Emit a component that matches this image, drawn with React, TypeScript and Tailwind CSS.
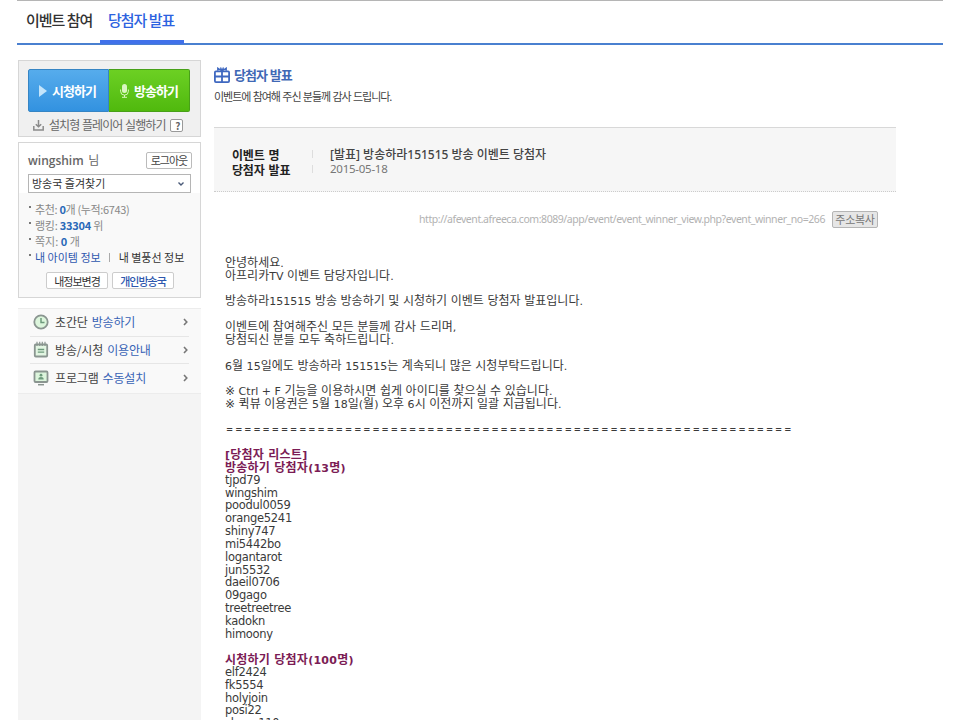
import { ReactNode } from "react";

const notice = [
  "안녕하세요.",
  "아프리카TV 이벤트 담당자입니다.",
  "",
  "방송하라151515 방송 방송하기 및 시청하기 이벤트 당첨자 발표입니다.",
  "",
  "이벤트에 참여해주신 모든 분들께 감사 드리며,",
  "당첨되신 분들 모두 축하드립니다.",
  "",
  "6월 15일에도 방송하라 151515는 계속되니 많은 시청부탁드립니다.",
  "",
  "※ Ctrl + F 기능을 이용하시면 쉽게 아이디를 찾으실 수 있습니다.",
  "※ 퀵뷰 이용권은 5월 18일(월) 오후 6시 이전까지 일괄 지급됩니다.",
];

const broadcastWinners = [
  "tjpd79",
  "wingshim",
  "poodul0059",
  "orange5241",
  "shiny747",
  "mi5442bo",
  "logantarot",
  "jun5532",
  "daeil0706",
  "09gago",
  "treetreetree",
  "kadokn",
  "himoony",
];

const viewWinners = ["elf2424", "fk5554", "holyjoin", "posi22", "shean110"];

// Hangul is set one pixel larger than the latin text around it
function Mixed({ text }: { text: string }) {
  return (
    <>
      {text.split(/([가-힣※]+)/).map((part, i) =>
        i % 2 ? (
          <span key={i} className="text-[12px]">
            {part}
          </span>
        ) : (
          part
        )
      )}
    </>
  );
}

function Line({ children, heading }: { children?: ReactNode; heading?: boolean }) {
  return (
    <div
      className={
        heading
          ? "h-[12.82px] font-bold tracking-[0.25px] text-[#7b1c55]"
          : "h-[12.82px] tracking-[0.02px]"
      }
    >
      {children}
    </div>
  );
}

function Winner({ id }: { id: string }) {
  return (
    <div className="h-[12.82px] text-[11.5px] leading-[11px] tracking-[-0.28px]">{id}</div>
  );
}

function ClockIcon() {
  return (
    <svg width="16" height="16" viewBox="0 0 16 16" fill="none">
      <circle cx="8" cy="8" r="6.7" fill="#dcf5dc" stroke="#8a9590" strokeWidth="1.8" />
      <path d="M8 4v4.5h3.5" stroke="#6d9a7c" strokeWidth="1.5" />
    </svg>
  );
}

function NoteIcon() {
  return (
    <svg width="16" height="17" viewBox="0 0 16 17" fill="none">
      <rect x="1.8" y="3.5" width="12.4" height="12" rx="1" fill="#e2f5e2" stroke="#8a9590" strokeWidth="1.8" />
      <path d="M4 .8V5M6.7.8V5M9.3.8V5M12 .8V5" stroke="#8a9590" strokeWidth="1.2" />
      <path d="M4.8 8.5h6.4M4.8 11.2h6.4" stroke="#6d9a7c" strokeWidth="1.3" />
    </svg>
  );
}

function MonitorIcon() {
  return (
    <svg width="16" height="16" viewBox="0 0 16 16" fill="none">
      <rect x="1.5" y="1.5" width="13" height="10.5" rx="1" fill="#dcf5dc" stroke="#8a9590" strokeWidth="1.8" />
      <circle cx="8" cy="5.2" r="1.4" fill="#6d9a7c" />
      <path d="M5.3 9.5c0-1.8 1-2.5 2.7-2.5s2.7.7 2.7 2.5z" fill="#6d9a7c" />
      <path d="M5 14.7h6" stroke="#8a9590" strokeWidth="1.5" />
    </svg>
  );
}

const menu = [
  { icon: <ClockIcon />, label: "초간단", link: "방송하기" },
  { icon: <NoteIcon />, label: "방송/시청", link: "이용안내" },
  { icon: <MonitorIcon />, label: "프로그램", link: "수동설치" },
];

function Tabs() {
  return (
    <nav className="ml-[17px] flex h-[45px] w-[926px] border-t border-t-[#b5b5b5] border-b-2 border-b-[#4a80d0] text-[15px] font-medium leading-[38px]">
      <a className="w-[83px] pl-[9px] tracking-[-1px] whitespace-nowrap text-[#333]">이벤트 참여</a>
      <a className="h-[43px] w-[84px] border-b-[4px] border-[#4071ea] pl-2 tracking-[-1px] whitespace-nowrap text-[#2c62e0]">
        당첨자 발표
      </a>
    </nav>
  );
}

function PlayBox() {
  return (
    <div className="h-[77px] border border-[#d6d6d6] bg-[#f0f0f0] px-[9px] pt-2">
      <div className="flex h-[43px] text-[13px] font-bold text-white">
        <button className="flex w-[81px] items-center rounded-l-[2px] border border-[#3685c4] bg-linear-to-b from-[#56acec] to-[#3292e0] pl-[10px] tracking-[-1px] whitespace-nowrap">
          <svg width="8" height="12" viewBox="0 0 8 12" className="mr-[5px] shrink-0">
            <path d="M0 0l8 6-8 6z" fill="#c4e5fb" />
          </svg>
          시청하기
        </button>
        <button className="flex w-[81px] items-center rounded-r-[2px] border border-l-0 border-[#48a018] bg-linear-to-b from-[#6cd023] to-[#50b90d] pl-[11px] tracking-[-1px] whitespace-nowrap">
          <svg width="9" height="14" viewBox="0 0 9 14" fill="none" className="mr-[5px] shrink-0">
            <rect x="2" y="0" width="5" height="9" rx="2.5" fill="#d9f6bf" />
            <path d="M.6 5.5v1.7a3.9 3.9 0 0 0 7.8 0V5.5M4.5 11v2M2 13.3h5" stroke="#d9f6bf" />
          </svg>
          방송하기
        </button>
      </div>
      <div className="mt-[6px] flex h-[14px] items-center pl-[5px] text-[12px] tracking-[-0.95px] whitespace-nowrap text-[#666] [word-spacing:1px]">
        <svg width="11" height="11" viewBox="0 0 11 11" fill="none" stroke="#8b8b8b" strokeWidth="1.5" className="mr-[5px] shrink-0">
          <path d="M.8 6v4h9.4V6M5.5 0v6.5M2.8 4.2l2.7 2.6 2.7-2.6" />
        </svg>
        설치형 플레이어 실행하기
        <span className="ml-[5px] flex h-[13px] w-[13px] items-center justify-center rounded-[2px] border border-[#999] bg-white pl-px text-[10px] font-bold">
          ?
        </span>
      </div>
    </div>
  );
}

function Bullet() {
  return <span className="mr-[4px] mb-[5px] size-[2px] shrink-0 bg-[#777]" />;
}

function ProfileBox() {
  return (
    <div className="mt-[5px] h-[156px] border border-[#d6d6d6] bg-[#f9f9f9]">
      <div className="h-[50px] bg-white px-[9px] pt-[9px]">
        <div className="flex h-[17px] items-center justify-between">
          <span className="font-['Open_Sans','Noto_Sans_CJK_KR',sans-serif] text-[12px] font-semibold text-[#666] [word-spacing:1.5px]">
            wingshim <span className="font-normal">님</span>
          </span>
          <button className="-mr-px flex h-[17px] w-[46px] items-center justify-center rounded-[2px] border border-[#bbb] text-[11px] tracking-[-1px] whitespace-nowrap text-[#444]">
            로그아웃
          </button>
        </div>
        <div className="mt-[5px] flex h-[19px] items-center justify-between border border-[#b5b5b5] pr-[6px] pl-[3px] text-[11px] text-[#333]">
          방송국 즐겨찾기
          <svg width="6" height="4" viewBox="0 0 6 4" fill="none" stroke="#4a5a78" strokeWidth="1.4">
            <path d="M.5.5L3 3 5.5.5" />
          </svg>
        </div>
      </div>
      <ul className="pt-[8px] pl-[10px] text-[11px] text-[#888]">
        <li className="flex h-[16px] items-center tracking-[-0.35px] whitespace-pre">
          <Bullet />
          추천: <b className="text-[#2a69b8]">0</b>개 (누적:6743)
        </li>
        <li className="flex h-[16px] items-center tracking-[-0.25px] whitespace-pre">
          <Bullet />
          랭킹: <b className="text-[#2a69b8]">33304</b> 위
        </li>
        <li className="flex h-[16px] items-center whitespace-pre">
          <Bullet />
          쪽지: <b className="text-[#2a69b8]">0</b> 개
        </li>
        <li className="flex h-[17px] items-center whitespace-nowrap text-[#333]">
          <Bullet />
          <a className="text-[#2d57ae]">내 아이템 정보</a>
          <span className="mr-[9px] ml-[8px] h-[9px] w-px bg-[#aaa]" />
          <a>내 별풍선 정보</a>
        </li>
      </ul>
      <div className="mt-[6px] flex gap-[4px] pl-[27px] text-[11px] tracking-[-1px] whitespace-nowrap">
        <button className="h-[17px] w-[62px] rounded-[2px] border border-[#ccc] bg-white leading-[14px] text-[#333]">
          내정보변경
        </button>
        <button className="h-[17px] w-[62px] rounded-[2px] border border-[#ccc] bg-white leading-[14px] font-medium text-[#2d57ae]">
          개인방송국
        </button>
      </div>
    </div>
  );
}

function SideMenu() {
  return (
    <ul className="mt-[10px] h-[86px] border-y border-[#ececec] bg-[#f9f9f9] px-3">
      {menu.map((item) => (
        <li
          key={item.link}
          className="flex h-[27.5px] items-center border-b border-[#e6e6e6] pl-[3px] text-[12px] tracking-[-0.15px] whitespace-nowrap text-[#444] last:border-0"
        >
          <span className="mr-[6px] w-4">{item.icon}</span>
          {item.label}
          <a className="ml-[4px] text-[#3762b5]">{item.link}</a>
          <svg width="5" height="8" viewBox="0 0 5 8" fill="none" stroke="#777" strokeWidth="1.6" className="mr-px ml-auto">
            <path d="M1 1l2.8 3L1 7" />
          </svg>
        </li>
      ))}
    </ul>
  );
}

function GiftIcon() {
  return (
    <svg width="16" height="16" viewBox="0 0 16 16" fill="none" stroke="#3f68c0">
      <rect x=".9" y="4.4" width="14.2" height="10.7" rx="1" strokeWidth="1.8" />
      <path d="M1 9.5h14M8 4.5V15" strokeWidth="1.8" />
      <path d="M8 4L3.8 1.2v2.6M8 4l4.2-2.8v2.6M8 4L6.5.4M8 4L9.5.4" strokeWidth="1.4" />
    </svg>
  );
}

function Content() {
  return (
    <main className="ml-[13px] w-[682px]">
      <div className="mt-[7px] flex h-[16px] items-center text-[13px] font-bold tracking-[-1px] text-[#3f68b5] [word-spacing:1px]">
        <GiftIcon />
        <h1 className="ml-[4px]">당첨자 발표</h1>
      </div>
      <p className="mt-[5px] text-[11px] leading-[16px] tracking-[-1.05px] text-[#444] [word-spacing:1px]">
        이벤트에 참여해 주신 분들께 감사 드립니다.
      </p>

      <dl className="mt-[23px] grid h-[65px] grid-cols-[80px_18px_1fr] content-start border-t border-b border-t-[#d8d8d8] border-b-[#ccc] bg-[#f6f6f6] pt-[19px] pl-[18px] leading-[15px] [border-bottom-style:dotted]">
        <dt className="text-[12px] font-bold tracking-[-0.2px] text-[#222] [word-spacing:1.5px]">이벤트 명</dt>
        <span className="mt-[3px] h-[8px] w-px bg-[#ddd]" />
        <dd className="font-['Noto_Sans','Noto_Sans_CJK_KR',sans-serif] text-[12px] font-medium text-[#444]">
          [발표] 방송하라151515 방송 이벤트 당첨자
        </dd>
        <dt className="text-[12px] font-bold tracking-[-0.2px] text-[#222] [word-spacing:1.5px]">당첨자 발표</dt>
        <span className="mt-[3px] h-[8px] w-px bg-[#ddd]" />
        <dd className="font-['Noto_Sans',sans-serif] text-[11.5px] leading-[14px] tracking-[-0.25px] text-[#777]">2015-05-18</dd>
      </dl>

      <div className="mt-[19px] flex h-[17px] items-center justify-end pr-[18px]">
        <span className="font-['Noto_Sans',sans-serif] text-[10.5px] tracking-[-0.44px] whitespace-nowrap text-[#b2b2b2]">
          http://afevent.afreeca.com:8089/app/event/event_winner_view.php?event_winner_no=266
        </span>
        <button className="ml-[7px] h-[17px] w-[46px] rounded-[2px] border border-[#b5b5b5] bg-[#e6e6e6] text-[11px] leading-[13px] tracking-[-0.3px] whitespace-nowrap text-[#777]">
          주소복사
        </button>
      </div>

      <article className="mt-[29px] pl-[11px] font-['DejaVu_Sans','Noto_Sans_CJK_KR',sans-serif] text-[11px] leading-[12.82px] whitespace-nowrap text-[#3a3a3a]">
        {notice.map((text, i) => (
          <Line key={i}>
            <Mixed text={text} />
          </Line>
        ))}
        <Line />
        <div className="h-[12.82px] pl-px text-[8.5px] leading-[10px] font-bold tracking-[2.03px]">
          {"=".repeat(62)}
        </div>
        <Line />
        <Line heading>
          <Mixed text="[당첨자 리스트]" />
        </Line>
        <Line heading>
          <Mixed text="방송하기 당첨자(13명)" />
        </Line>
        {broadcastWinners.map((id) => (
          <Winner key={id} id={id} />
        ))}
        <Line />
        <Line heading>
          <Mixed text="시청하기 당첨자(100명)" />
        </Line>
        {viewWinners.map((id) => (
          <Winner key={id} id={id} />
        ))}
      </article>
    </main>
  );
}

export default function App() {
  return (
    <div className="h-[720px] w-[960px] overflow-hidden bg-white font-['Noto_Sans_CJK_KR',sans-serif]">
      <Tabs />
      <div className="mt-[15px] ml-[18px] flex h-[660px] items-stretch">
        <aside className="flex w-[183px] flex-col">
          <PlayBox />
          <ProfileBox />
          <SideMenu />
          <div className="flex-1 bg-[#f4f4f4]" />
        </aside>
        <Content />
      </div>
    </div>
  );
}
